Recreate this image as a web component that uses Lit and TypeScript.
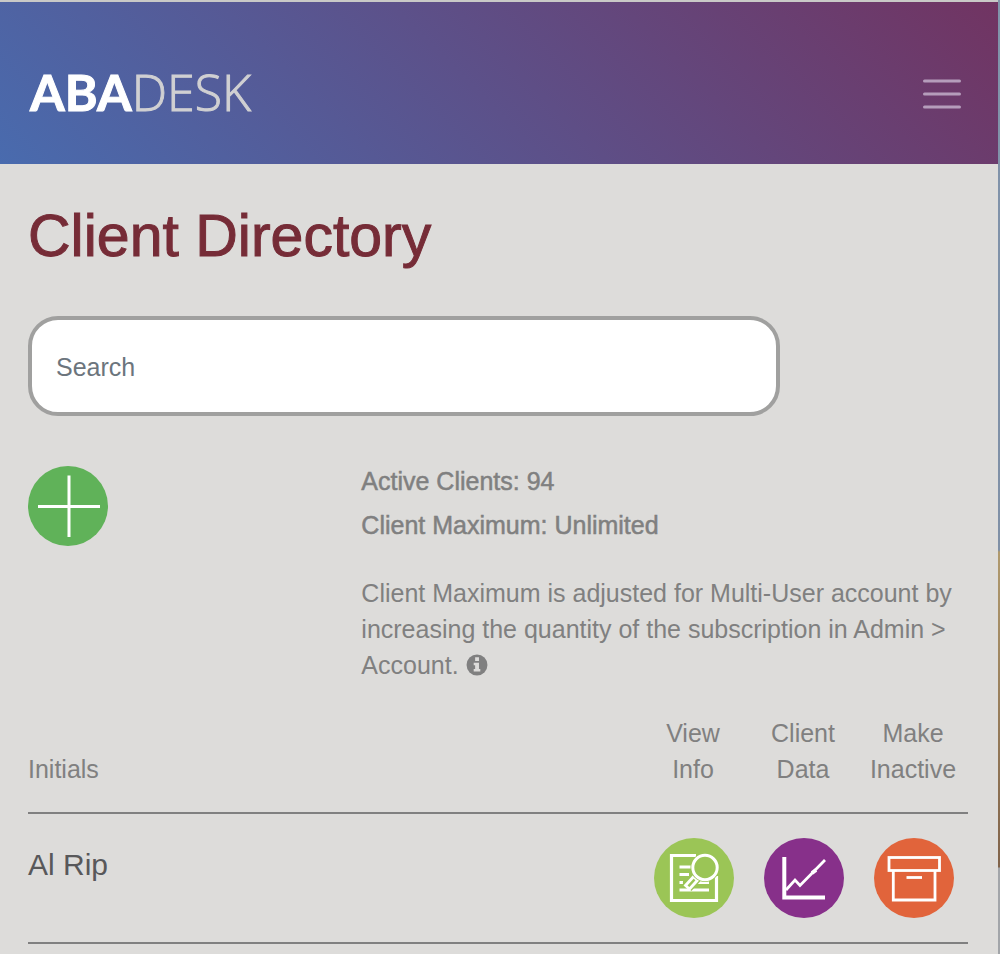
import { LitElement, html, svg, css } from "lit";
import { customElement, property, state } from "lit/decorators.js";

interface Client {
  id: number;
  initials: string;
}

const plusIcon = svg`
  <circle cx="40" cy="40" r="40" fill="#60b259"/>
  <path d="M41 9.5V71M10 40.5H72" stroke="#fff" stroke-width="3" fill="none"/>`;

const infoIcon = svg`
  <circle cx="40" cy="40" r="40" fill="#9bc556"/>
  <g stroke="#fff" fill="none">
    <path d="M42 17.500H17.500V62.500H62.500V38" stroke-width="3.200"/>
    <path d="M25.500 29H38M25.500 36.500H35M25.500 44.500H29M25.500 52H55M43 44.500H55" stroke-width="3"/>
  </g>
  <path d="M44 37L33 49" stroke="#9bc556" stroke-width="12"/>
  <path d="M41.500 36.500L31.500 47.500L35.500 51L45.500 40Z" fill="#9bc556" stroke="#fff" stroke-width="2.800"/>
  <path d="M40 41L44.500 36.500" stroke="#fff" stroke-width="6"/>
  <circle cx="51" cy="29.500" r="14.500" fill="#9bc556"/>
  <circle cx="51" cy="29.500" r="12.200" fill="none" stroke="#fff" stroke-width="3"/>`;

const chartIcon = svg`
  <circle cx="40" cy="40" r="40" fill="#87308a"/>
  <g stroke="#fff" fill="none">
    <path d="M20.300 19V59.500H61" stroke-width="4"/>
    <path d="M22 52L31 42L36 47.500L61 22" stroke-width="2.800"/>
    <path d="M48 35L52 32" stroke-width="4"/>
  </g>`;

const boxIcon = svg`
  <circle cx="40" cy="40" r="40" fill="#e1643b"/>
  <g stroke="#fff" fill="none" stroke-width="2.800">
    <rect x="15" y="19.500" width="50.500" height="13"/>
    <path d="M19.300 33V62H61V33"/>
    <path d="M32.500 39.500H48"/>
  </g>`;

@customElement("icon-button")
class IconButton extends LitElement {
  static styles = css`
    :host { display: inline-block; }
    .button {
      display: block;
      padding: 0;
      border: 0;
      border-radius: 50%;
      background: none;
      cursor: pointer;
    }
    .glyph { display: block; width: 80px; height: 80px; }
  `;
  @property() label = "";
  @property({ attribute: false }) icon: unknown = null;

  render() {
    return html`<button class="button" type="button" aria-label=${this.label}>
      <svg class="glyph" viewBox="0 0 80 80" aria-hidden="true">${this.icon}</svg>
    </button>`;
  }
}

@customElement("app-root")
class AppRoot extends LitElement {
  static styles = css`
    :host {
      display: grid;
      grid-template-columns: minmax(0, 1fr) 2px;
      min-height: 100vh;
      background: #dddcda;
      color: #808080;
      font: 25px/36px "Liberation Sans", Arial, sans-serif;
    }
    .edge {
      background: linear-gradient(#8194ab 0, #7f90a6 550px, #b09a6e 552px, #80634a 867px, #a2a5a9 868px);
    }
    .header {
      display: flex;
      align-items: center;
      justify-content: space-between;
      box-sizing: border-box;
      height: 164px;
      padding: 22px 36px 0 30px;
      border-top: 2px solid #c9c9c7;
      background: linear-gradient(45deg, #496bae, #713462);
      background-clip: padding-box;
    }
    .logo {
      padding-bottom: 4px;
      color: #fff;
      font: 700 50px/60px Lato, sans-serif;
      text-decoration: none;
      -webkit-text-stroke: 1px currentColor;
    }
    .light { color: #d0d0d2; font-family: "Open Sans", sans-serif; font-weight: 300; }
    .menu {
      padding: 0;
      border: 0;
      background: none;
      cursor: pointer;
    }
    .bars { display: block; width: 40px; height: 32px; }
    .content { padding: 36px 30px 0 28px; }
    .title {
      margin: 0 0 44px;
      color: #762c37;
      font-size: 59px;
      font-weight: 400;
      line-height: 72px;
      -webkit-text-stroke: 1px currentColor;
    }
    .search {
      display: block;
      box-sizing: border-box;
      width: 80%;
      height: 100px;
      padding: 2px 24px 0;
      border: 4px solid #a0a09f;
      border-radius: 30px;
      background: #fff;
      color: #495057;
      font: inherit;
    }
    .search::placeholder { color: #6c757d; opacity: 1; }
    .summary {
      display: grid;
      grid-template-columns: 1fr 2fr;
      gap: 30px;
      margin: 47px 0 32px;
    }
    .add { padding-top: 3px; }
    .count { margin: 0 0 8px; -webkit-text-stroke: 0.5px currentColor; }
    .note { margin: 32px 0 0; }
    .info { width: 22px; height: 22px; vertical-align: -2px; }
    .clients { width: 100%; border-collapse: separate; border-spacing: 0; table-layout: fixed; }
    .head, .cell {
      padding: 0 0 25px;
      border-bottom: 2px solid #808080;
      font-weight: 400;
      text-align: center;
      vertical-align: bottom;
    }
    .cell { padding: 24px 0; vertical-align: top; line-height: 0; }
    .tool { padding-left: 2px; }
    .action { width: 110px; }
    .start { text-align: left; }
    .name { color: #58585a; font-size: 30px; line-height: 54px; }
  `;

  @state() private clients: Client[] = [{ id: 1, initials: "Al Rip" }];

  render() {
    return html`
      <div>
        <header class="header">
          <a class="logo" href="#">ABA<span class="light">DESK</span></a>
          <button class="menu" type="button" aria-label="Menu">
            <svg class="bars" viewBox="0 0 40 32" aria-hidden="true">
              <path d="M2.500 3H37.500M2.500 16H37.500M2.500 29H37.500" stroke="#b59dbb" stroke-width="3" stroke-linecap="round"/>
            </svg>
          </button>
        </header>
        <main class="content">
          <h1 class="title">Client Directory</h1>
          <input class="search" type="search" placeholder="Search" aria-label="Search">
          <section class="summary">
            <div class="add"><icon-button label="Add client" .icon=${plusIcon}></icon-button></div>
            <div>
              <p class="count">Active Clients: 94</p>
              <p class="count">Client Maximum: Unlimited</p>
              <p class="note">Client Maximum is adjusted for Multi-User account by increasing the quantity of the subscription in Admin &gt; Account. <svg class="info" viewBox="0 0 20 20" aria-hidden="true">
                <circle cx="10" cy="10" r="9.500" fill="#808080"/>
                <path d="M8.300 3H11.800V6.300H8.300ZM7 8H11.800V13.700H13V16H7V13.700H8.300V10.300H7Z" fill="#dddcda"/>
              </svg></p>
            </div>
          </section>
          <table class="clients">
            <thead>
              <tr>
                <th class="head start" scope="col">Initials</th>
                <th class="head action" scope="col">View<br>Info</th>
                <th class="head action" scope="col">Client<br>Data</th>
                <th class="head action" scope="col">Make<br>Inactive</th>
              </tr>
            </thead>
            <tbody>
              ${this.clients.map((c) => html`
                <tr>
                  <td class="cell start name">${c.initials}</td>
                  <td class="cell tool"><icon-button label="View info" .icon=${infoIcon}></icon-button></td>
                  <td class="cell tool"><icon-button label="Client data" .icon=${chartIcon}></icon-button></td>
                  <td class="cell tool"><icon-button label="Make inactive" .icon=${boxIcon}></icon-button></td>
                </tr>`)}
            </tbody>
          </table>
        </main>
      </div>
      <div class="edge"></div>
    `;
  }
}
